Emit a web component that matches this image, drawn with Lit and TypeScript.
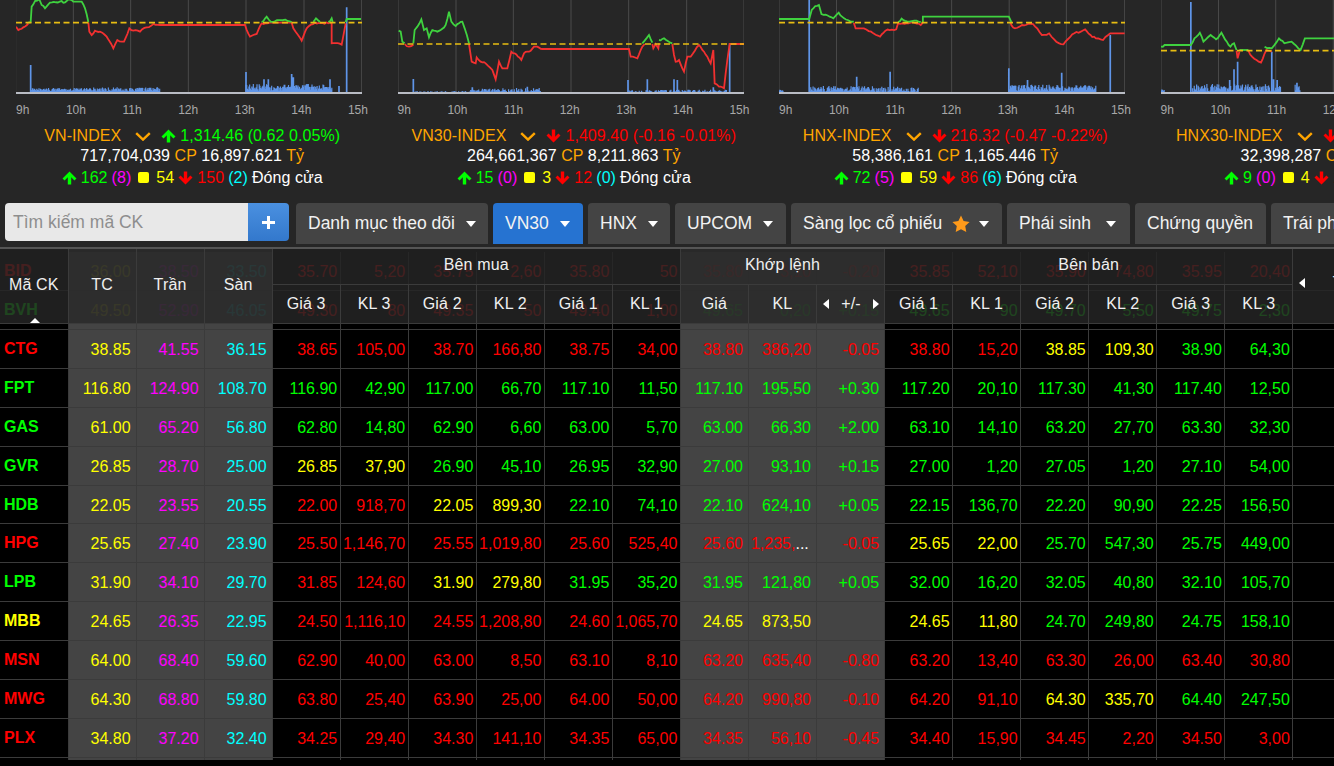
import { LitElement, html, css, svg } from "lit";
import { customElement } from "lit/decorators.js";

type P = [number, number];

function jag(pts: P[], amp = 3): string {
  const out: string[] = [];
  let n = 0;
  pts.forEach((p, i) => {
    if (i === 0) { out.push(`${p[0]},${p[1]}`); return; }
    const q = pts[i - 1];
    const dx = p[0] - q[0], dy = p[1] - q[1];
    if (dy === 0 || Math.abs(dx) < 3) { out.push(`${p[0]},${p[1]}`); return; }
    const steps = Math.max(1, Math.round(Math.abs(dx) / 6));
    for (let s = 1; s <= steps; s++) {
      n++;
      const t = s / steps;
      const j = s === steps ? 0 : Math.sin(n * 12.9898) * 43758.5453 % 1 * amp;
      out.push(`${(q[0] + dx * t).toFixed(1)},${(q[1] + dy * t + j).toFixed(1)}`);
    }
  });
  return out.join(" ");
}

function barPath(ranges: number[][], base: number): string {
  let d = "";
  let n = 0;
  for (const [a, b, lo, hi, step] of ranges) {
    for (let x = a; x < b; x += step || 2.2) {
      n++;
      const r = Math.abs(Math.sin(n * 78.233) * 12543.21 % 1);
      d += `M${x.toFixed(1)} ${base}V${(base - lo - (hi - lo) * r).toFixed(1)}`;
    }
  }
  return d;
}

function spikePath(spikes: P[], base: number): string {
  return spikes.map(([x, y]) => `M${x} ${base}V${y}`).join("");
}

interface Chart {
  vx: number; vw: number; dash: number;
  green: P[][]; red: P[][];
  bars: string; spikes: string; hair: number[];
}

const charts: Chart[] = [
  {
    vx: 48, vw: 1038, dash: 68,
    green: [
      [[85, 68], [92, 66], [95, 20], [105, 3], [118, -2], [125, 15], [135, 25], [150, 8], [185, 3], [190, 8], [205, -2], [220, 5], [245, 5], [255, 25], [265, 66]],
      [[785, 66], [800, 50], [812, 65], [850, 60], [875, 66]],
      [[940, 66], [948, 55], [960, 66]],
      [[985, 66], [995, 55], [998, 66]],
      [[1037, 66], [1040, 57], [1083, 57]],
    ],
    red: [
      [[48, 80], [55, 90], [70, 82], [85, 70]],
      [[265, 68], [268, 95], [275, 105], [285, 92], [300, 95], [320, 110], [340, 145], [352, 120], [372, 125], [388, 85], [400, 92], [420, 95], [440, 82], [460, 72], [480, 75], [735, 75], [750, 110], [770, 102], [785, 70], [812, 68], [875, 68], [880, 85], [905, 122], [920, 85], [945, 68], [985, 70], [995, 68], [995, 130], [1025, 134], [1037, 70]],
    ],
    bars: barPath([[95, 270, 5, 14], [270, 480, 4, 16], [738, 996, 6, 26]], 278),
    spikes: spikePath([[92, 195], [738, 216], [875, 222], [880, 232], [792, 238], [805, 238], [990, 238], [1017, 258], [1040, 22]], 278),
    hair: [47, 220, 392, 565, 738, 912, 1085],
  },
  {
    vx: 22, vw: 1038, dash: 132,
    green: [
      [[24, 92], [30, 95], [35, 125], [42, 130]],
      [[68, 130], [72, 90], [80, 80], [92, 58], [100, 90], [108, 85], [115, 112], [125, 90], [140, 95], [150, 90], [165, 75], [175, 35], [182, 65], [195, 78], [205, 70], [215, 65], [222, 85], [235, 130]],
      [[755, 130], [762, 122], [775, 105], [785, 128]],
      [[805, 120], [820, 115], [845, 130]],
    ],
    red: [
      [[42, 132], [55, 140], [68, 134]],
      [[235, 132], [243, 185], [255, 190], [258, 172], [270, 185], [285, 190], [305, 210], [315, 238], [325, 185], [335, 205], [350, 205], [362, 155], [372, 160], [382, 170], [392, 180], [400, 160], [415, 155], [430, 140], [440, 140], [455, 147], [715, 147], [720, 170], [740, 175], [755, 140], [762, 132]],
      [[785, 132], [788, 145], [795, 132], [803, 145], [805, 130]],
      [[845, 132], [850, 165], [855, 185], [865, 180], [880, 215], [890, 170], [900, 170], [925, 135], [940, 155], [950, 170], [960, 190], [968, 150], [972, 250], [985, 260], [1000, 265], [1010, 180], [1017, 132], [1060, 132]],
    ],
    bars: barPath([[72, 240, 1, 5, 4], [240, 330, 2, 12], [330, 450, 2, 14, 3.4], [715, 1010, 1, 9, 3.4]], 278),
    spikes: spikePath([[68, 237], [712, 240], [770, 238], [850, 238], [860, 240], [968, 262], [1017, 130], [410, 260], [245, 262]], 278),
    hair: [22, 196, 368, 541, 714, 888, 1060],
  },
  {
    vx: 24, vw: 962, dash: 68,
    green: [
      [[24, 57], [108, 57], [115, 30], [125, 18], [135, 15], [142, 42], [165, 50], [175, 55], [190, 38], [205, 55], [215, 60], [232, 65]],
      [[355, 66], [365, 56], [380, 64], [400, 62], [418, 66]],
      [[424, 68], [424, 50], [663, 50], [670, 66]],
    ],
    red: [
      [[232, 68], [237, 85], [260, 85], [280, 95], [305, 110], [320, 92], [350, 88], [355, 70], [390, 68], [418, 75], [424, 68]],
      [[668, 68], [670, 75], [680, 85], [700, 75], [730, 72], [755, 105], [775, 100], [795, 125], [815, 133], [845, 100], [875, 88], [890, 105], [905, 115], [925, 120], [945, 100], [985, 100]],
    ],
    bars: barPath([[24, 36, 3, 9], [110, 290, 3, 20], [290, 412, 2, 18], [665, 905, 5, 24]], 278),
    spikes: spikePath([[108, -2], [240, 230], [333, 215], [663, 205], [715, 240], [810, 218], [945, 105]], 278),
    hair: [24, 184, 343, 504, 664, 823, 985],
  },
  {
    vx: 1087, vw: 962, dash: 152,
    green: [
      [[1087, 140], [1097, 135], [1170, 135], [1180, 115], [1195, 98], [1205, 125], [1225, 105], [1240, 118], [1255, 98], [1270, 125], [1280, 140], [1290, 130], [1297, 150]],
      [[1305, 150], [1330, 150]],
      [[1375, 140], [1395, 145], [1415, 115], [1430, 130], [1450, 125], [1475, 150], [1487, 115], [1600, 115]],
    ],
    red: [
      [[1297, 152], [1300, 175], [1305, 155]],
      [[1330, 152], [1340, 170], [1365, 188], [1380, 150], [1395, 155]],
    ],
    bars: barPath([[1087, 1098, 3, 10], [1175, 1420, 3, 26], [1460, 1475, 2, 24]], 278),
    spikes: spikePath([[1170, 6], [1290, 208], [1300, 185], [1278, 240], [1395, 155], [1400, 238], [1410, 240], [1465, 248]], 278),
    hair: [1087, 1247, 1406, 1566],
  },
];

@customElement("mini-chart")
class MiniChart extends LitElement {
  static properties = { idx: { type: Number } };
  idx = 0;
  static styles = css`
    :host { display: block; width: 346px; height: 94px; }
    svg { display: block; overflow: hidden; }
    .grid { stroke: #4a4a4a; stroke-width: 1; fill: none; }
    .axis { stroke: #b9bcc4; stroke-width: 2; fill: none; }
    .dash { stroke: #e8bd12; stroke-width: 1.6; stroke-dasharray: 6 3.5; fill: none; }
    .g { stroke: #3fd23f; stroke-width: 1.8; fill: none; }
    .r { stroke: #f23030; stroke-width: 1.8; fill: none; }
    .b { stroke: #5f95e8; stroke-width: 1.2; fill: none; }
    .s { stroke: #5f95e8; stroke-width: 1.7; fill: none; }
  `;
  render() {
    const c = charts[this.idx];
    return html`<svg width="346" height="94" viewBox="${c.vx} 0 ${c.vw} 282" preserveAspectRatio="none">
      ${c.hair.map((x) => svg`<path class="grid" vector-effect="non-scaling-stroke" d="M${x} 0V280"></path>`)}
      <path class="b" vector-effect="non-scaling-stroke" d="${c.bars}"></path>
      <path class="s" vector-effect="non-scaling-stroke" d="${c.spikes}"></path>
      ${c.red.map((p) => svg`<polyline class="r" vector-effect="non-scaling-stroke" points="${jag(p)}"></polyline>`)}
      ${c.green.map((p) => svg`<polyline class="g" vector-effect="non-scaling-stroke" points="${jag(p)}"></polyline>`)}
      <path class="dash" vector-effect="non-scaling-stroke" d="M${c.vx} ${c.dash}H${c.vx + c.vw}"></path>
      <path class="axis" vector-effect="non-scaling-stroke" d="M${c.vx} 279H${c.vx + c.vw}"></path>
    </svg>`;
  }
}

const arrow = (up: boolean) => html`<svg class="arr ${up ? "g" : "r"}" width="15" height="14" viewBox="0 0 15 14">
  <path transform="${up ? "" : "rotate(180 7.5 7)"}" d="M7.5 .5 14.5 7.4 12.4 9.4 9.2 6.3V13.5H5.8V6.3L2.6 9.4.5 7.4Z"></path></svg>`;

const indices = [
  { name: "VN-INDEX", up: true, val: "1,314.46 (0.62 0.05%)", vol: "717,704,039", amt: "16,897.621", a: "162", b: "(8)", c: "54", d: "150", e: "(2)" },
  { name: "VN30-INDEX", up: false, val: "1,409.40 (-0.16 -0.01%)", vol: "264,661,367", amt: "8,211.863", a: "15", b: "(0)", c: "3", d: "12", e: "(0)" },
  { name: "HNX-INDEX", up: false, val: "216.32 (-0.47 -0.22%)", vol: "58,386,161", amt: "1,165.446", a: "72", b: "(5)", c: "59", d: "86", e: "(6)" },
  { name: "HNX30-INDEX", up: false, val: "469.90 (-0.50 -0.11%)", vol: "32,398,287", amt: "658.346", a: "9", b: "(0)", c: "4", d: "17", e: "(1)" },
];

const rows: [string, string, string, string, string, string[]][] = [
  ["BID", "r", "36.00", "38.50", "33.50", "r35.70 r5,20 r35.75 r2,60 r35.80 r50 r35.80 r3,10 r-0.20 r35.85 r52,10 r35.90 r74,80 r35.95 r20,40".split(" ")],
  ["BVH", "g", "49.50", "52.90", "46.05", "r49.30 r80 r49.35 r50 r49.40 r1,00 g49.65 g0,20 g+0.15 g49.65 g90 g49.70 g5,50 g49.75 g2,30".split(" ")],
  ["CTG", "r", "38.85", "41.55", "36.15", "r38.65 r105,00 r38.70 r166,80 r38.75 r34,00 r38.80 r386,20 r-0.05 r38.80 r15,20 y38.85 y109,30 g38.90 g64,30".split(" ")],
  ["FPT", "g", "116.80", "124.90", "108.70", "g116.90 g42,90 g117.00 g66,70 g117.10 g11,50 g117.10 g195,50 g+0.30 g117.20 g20,10 g117.30 g41,30 g117.40 g12,50".split(" ")],
  ["GAS", "g", "61.00", "65.20", "56.80", "g62.80 g14,80 g62.90 g6,60 g63.00 g5,70 g63.00 g66,30 g+2.00 g63.10 g14,10 g63.20 g27,70 g63.30 g32,30".split(" ")],
  ["GVR", "g", "26.85", "28.70", "25.00", "y26.85 y37,90 g26.90 g45,10 g26.95 g32,90 g27.00 g93,10 g+0.15 g27.00 g1,20 g27.05 g1,20 g27.10 g54,00".split(" ")],
  ["HDB", "g", "22.05", "23.55", "20.55", "r22.00 r918,70 y22.05 y899,30 g22.10 g74,10 g22.10 g624,10 g+0.05 g22.15 g136,70 g22.20 g90,90 g22.25 g156,50".split(" ")],
  ["HPG", "r", "25.65", "27.40", "23.90", "r25.50 r1,146,70 r25.55 r1,019,80 r25.60 r525,40 r25.60 r1,235,... r-0.05 y25.65 y22,00 g25.70 g547,30 g25.75 g449,00".split(" ")],
  ["LPB", "g", "31.90", "34.10", "29.70", "r31.85 r124,60 y31.90 y279,80 g31.95 g35,20 g31.95 g121,80 g+0.05 g32.00 g16,20 g32.05 g40,80 g32.10 g105,70".split(" ")],
  ["MBB", "y", "24.65", "26.35", "22.95", "r24.50 r1,116,10 r24.55 r1,208,80 r24.60 r1,065,70 y24.65 y873,50 y y24.65 y11,80 g24.70 g249,80 g24.75 g158,10".split(" ")],
  ["MSN", "r", "64.00", "68.40", "59.60", "r62.90 r40,00 r63.00 r8,50 r63.10 r8,10 r63.20 r635,40 r-0.80 r63.20 r13,40 r63.30 r26,00 r63.40 r30,80".split(" ")],
  ["MWG", "r", "64.30", "68.80", "59.80", "r63.80 r25,40 r63.90 r25,00 r64.00 r50,00 r64.20 r990,80 r-0.10 r64.20 r91,10 y64.30 y335,70 g64.40 g247,50".split(" ")],
  ["PLX", "r", "34.80", "37.20", "32.40", "r34.25 r29,40 r34.30 r141,10 r34.35 r65,00 r34.35 r56,10 r-0.45 r34.40 r15,90 r34.45 r2,20 r34.50 r3,00".split(" ")],
];

const tabs = [
  { t: "Danh mục theo dõi", caret: true, w: 192 },
  { t: "VN30", caret: true, w: 90, on: true },
  { t: "HNX", caret: true, w: 82 },
  { t: "UPCOM", caret: true, w: 111 },
  { t: "Sàng lọc cổ phiếu", caret: true, w: 211, star: true },
  { t: "Phái sinh", caret: true, w: 123, wide: true },
  { t: "Chứng quyền", w: 131 },
  { t: "Trái phiếu", w: 120 },
];

@customElement("app-root")
class AppRoot extends LitElement {
  static styles = css`
    :host { display: block; width: 1334px; height: 766px; overflow: hidden; background: #262626; color: #fff; font: 16px "Liberation Sans", Arial, sans-serif; }
    .top { display: flex; width: 1700px; height: 203px; }
    .card { width: 381.5px; flex: none; }
    .chart { margin-left: 16px; width: 346px; }
    .labels { margin: 9px 0 0 16px; width: 352px; height: 14px; display: flex; justify-content: space-between; font-size: 12px; line-height: 14px; color: #a8a8a8; }
    .info { margin-top: 9px; padding-left: 3px; text-align: center; white-space: nowrap; letter-spacing: .07px; }
    .ln { display: flex; justify-content: center; align-items: center; height: 20px; gap: 4px; }
    .ln.last { height: 21px; padding-top: 1px; }
    .or { color: #ffa500; }
    .g { color: #00ff00; fill: #00ff00; }
    .r { color: #ff0000; fill: #ff0000; }
    .y { color: #ffff00; }
    .v { color: #ff00ff; }
    .c { color: #00ffff; }
    .w { color: #fff; }
    .arr { flex: none; }
    .chev { margin: 0 6px 0 10px; flex: none; }
    .sq { width: 11px; height: 11px; border-radius: 2px; background: #ffff00; margin: 0 3px; flex: none; }

    .bar { display: flex; height: 41px; padding-left: 5px; gap: 5px; width: 1500px; }
    .search { display: flex; width: 284px; height: 38px; margin-right: 2px; flex: none; border-radius: 4px; overflow: hidden; }
    .search .ph { flex: 1; background: #e8e8e8; color: #8e8e8e; font-size: 17.5px; line-height: 38px; padding-left: 8px; }
    .search .plus { width: 41px; background: linear-gradient(#4a90e0, #3378cc); display: flex; align-items: center; justify-content: center; }
    .tab { flex: none; background: #444; border-radius: 4px 4px 0 0; display: flex; align-items: center; padding-left: 12px; font-size: 17.5px; color: #f2f2f2; box-sizing: border-box; height: 41px; white-space: nowrap; }
    .tab.on { background: #2673d1; }
    .caret { width: 0; height: 0; border-left: 5px solid transparent; border-right: 5px solid transparent; border-top: 6px solid #fff; margin-left: 11px; }
    .star { margin-left: 10px; }
    .tab .star + .caret { margin-left: 9px; }
    .tab.wide .caret { margin-left: 15px; }

    .tbl { position: relative; margin-top: 3px; height: 519px; border-top: 2px solid #555; background: #000; overflow: hidden; }
    .rows { padding-top: 3.2px; }
    .row { display: grid; grid-template-columns: 68.5px repeat(18, 68.05px) 41px; height: 38.9px; box-sizing: border-box; border-bottom: 1px solid #3b3b3b; line-height: 39px; }
    .cell { box-sizing: border-box; border-right: 1px solid #3b3b3b; text-align: right; padding-right: 2.5px; white-space: nowrap; overflow: hidden; }
    .cell.sym { text-align: left; padding-left: 4px; font-weight: 700; line-height: 37px; }
    .cell.ref { background: #444; padding-right: 5px; }
    .cell.match { background: #444; padding-right: 5px; }
    .cell.end { border-right: 0; }
    .cell.clip { text-align: left; padding: 0 0 0 2px; }
    .dots { color: #fff; }
    .tail { display: grid; grid-template-columns: 68.5px repeat(18, 68.05px); height: 2px; }
    .tail div { border-right: 1px solid #3b3b3b; box-sizing: border-box; }
    .tail .ref { background: #444; }

    .head { position: absolute; left: 0; top: 0; width: 1334px; height: 75px; display: grid; grid-template-columns: 68.5px repeat(18, 68.05px) 41px; grid-template-rows: 36px 39px; text-align: center; color: #f0f0f0; letter-spacing: .15px; }
    .h { box-sizing: border-box; display: flex; align-items: center; justify-content: center; background: rgba(36, 36, 36, .85); border-right: 1px solid #3b3b3b; border-bottom: 1px solid #3b3b3b; position: relative; overflow: hidden; white-space: nowrap; }
    .h.tall { grid-row: span 2; padding-bottom: 2px; }
    .h.light { background: rgba(44, 44, 44, .94); }
    .h.g6 { grid-column: span 6; }
    .h.g3 { grid-column: span 3; }
    .h.up { padding-bottom: 4px; }
    .h.rsplit { justify-content: space-between; padding: 0 5px 0 6px; }
    .tri-l { width: 0; height: 0; border-top: 5px solid transparent; border-bottom: 5px solid transparent; border-right: 6px solid #fff; }
    .tri-r { width: 0; height: 0; border-top: 5px solid transparent; border-bottom: 5px solid transparent; border-left: 6px solid #fff; }
    .sort { position: absolute; left: 30px; bottom: 0; width: 0; height: 0; border-left: 5.5px solid transparent; border-right: 5.5px solid transparent; border-bottom: 5.5px solid #fff; }
    .h.end-h { border-right: 0; justify-content: flex-start; padding: 0 0 6px 6px; }
    .end-h .lbl { position: absolute; left: 39px; top: 18px; line-height: 20px; }
  `;

  card(d: (typeof indices)[number], i: number) {
    return html`<div class="card">
      <mini-chart class="chart" .idx=${i}></mini-chart>
      <div class="labels">${["9h", "10h", "11h", "12h", "13h", "14h", "15h"].map((l) => html`<span>${l}</span>`)}</div>
      <div class="info">
        <div class="ln"><span class="or">${d.name}</span>
          <svg class="chev" width="16" height="9" viewBox="0 0 16 9"><path d="M1.2 1.2 8 7.6 14.8 1.2" fill="none" stroke="#ffa500" stroke-width="2.4"></path></svg>
          ${arrow(d.up)}<span class="${d.up ? "g" : "r"}">${d.val}</span></div>
        <div class="ln"><span>${d.vol} <span class="or">CP</span> ${d.amt} <span class="or">Tỷ</span></span></div>
        <div class="ln last">${arrow(true)}<span class="g">${d.a}</span><span class="v">${d.b}</span><span class="sq"></span><span class="y">${d.c}</span>${arrow(false)}<span class="r">${d.d}</span><span class="c">${d.e}</span><span class="w">Đóng cửa</span></div>
      </div>
    </div>`;
  }

  cellFor(v: string, i: number) {
    const match = i >= 6 && i < 9 ? "match" : "";
    const text = v.slice(1);
    if (text.endsWith("...")) {
      return html`<div class="cell ${match} clip ${v[0]}">${text.slice(0, -3)}<span class="dots">...</span></div>`;
    }
    return html`<div class="cell ${match} ${v[0]}">${text}</div>`;
  }

  render() {
    const sub = ["Giá 3", "KL 3", "Giá 2", "KL 2", "Giá 1", "KL 1"];
    const sell = ["Giá 1", "KL 1", "Giá 2", "KL 2", "Giá 3", "KL 3"];
    return html`
      <div class="top">${indices.map((d, i) => this.card(d, i))}</div>
      <div class="bar">
        <div class="search"><div class="ph">Tìm kiếm mã CK</div>
          <div class="plus"><svg width="13" height="13" viewBox="0 0 13 13"><path d="M5 0h3v5h5v3H8v5H5V8H0V5h5z" fill="#fff"></path></svg></div></div>
        ${tabs.map((t) => html`<div class="tab ${t.on ? "on" : ""} ${t.wide ? "wide" : ""}" style="width:${t.w}px">${t.t}
          ${t.star ? html`<svg class="star" width="18" height="18" viewBox="0 0 18 18"><path d="M9 .5l2.6 5.6 6 .8-4.4 4.2 1.1 6L9 14.2l-5.3 2.9 1.1-6L.4 6.9l6-.8z" fill="#ff9a1a"></path></svg>` : ""}
          ${t.caret ? html`<span class="caret"></span>` : ""}</div>`)}
      </div>
      <div class="tbl">
        <div class="rows">
          ${rows.map((r) => html`<div class="row">
            <div class="cell sym ${r[1]}">${r[0]}</div>
            <div class="cell ref y">${r[2]}</div>
            <div class="cell ref v">${r[3]}</div>
            <div class="cell ref c">${r[4]}</div>
            ${r[5].map((v, i) => this.cellFor(v, i))}
            <div class="cell end"></div>
          </div>`)}
          <div class="tail">${Array.from({ length: 19 }, (_, i) => html`<div class="${(i >= 1 && i <= 3) || (i >= 10 && i <= 12) ? "ref" : ""}"></div>`)}</div>
        </div>
        <div class="head">
          <div class="h tall">Mã CK<span class="sort"></span></div>
          <div class="h tall light">TC</div>
          <div class="h tall light">Trần</div>
          <div class="h tall light">Sàn</div>
          <div class="h g6 up">Bên mua</div>
          <div class="h g3 up light">Khớp lệnh</div>
          <div class="h g6 up">Bên bán</div>
          <div class="h tall end-h"><span class="tri-l"></span><span class="lbl">+/-</span></div>
          ${sub.map((s) => html`<div class="h">${s}</div>`)}
          <div class="h light">Giá</div>
          <div class="h light">KL</div>
          <div class="h light rsplit"><span class="tri-l"></span>+/-<span class="tri-r"></span></div>
          ${sell.map((s) => html`<div class="h">${s}</div>`)}
        </div>
      </div>
    `;
  }
}
